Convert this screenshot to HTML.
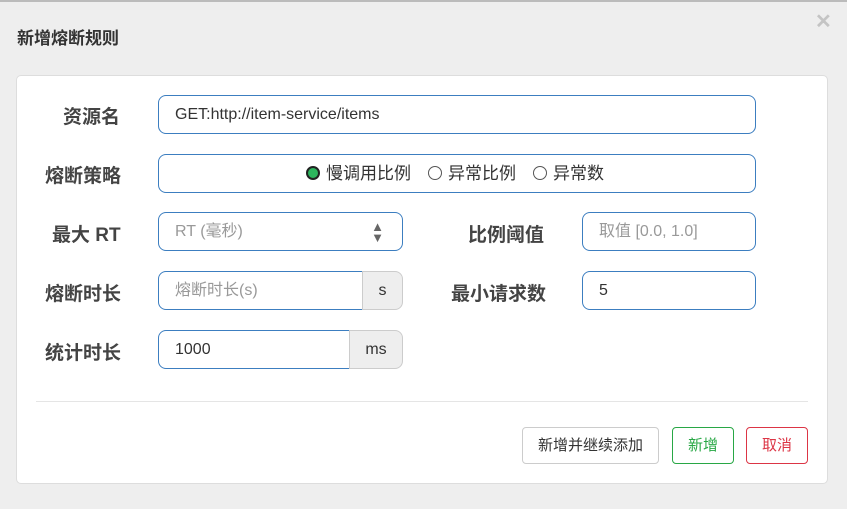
<!DOCTYPE html>
<html><head><meta charset="utf-8"><style>
*{box-sizing:border-box;margin:0;padding:0}
body{width:847px;height:509px;background:#eee;font-family:"Liberation Sans","Noto Sans CJK SC",sans-serif;position:relative;overflow:hidden;color:#333}
.a{position:absolute}
.title{left:17px;top:24px;font-size:17px;font-weight:bold;color:#333}
.close{left:815px;top:9px;font-size:20px;color:#c4c4c4;font-weight:bold}
.card{left:16px;top:75px;width:812px;height:409px;background:#fff;border:1px solid #ddd;border-radius:5px}
.lbl{font-size:19px;font-weight:bold;color:#444;line-height:22px}
.in{border:1px solid #3c7ec0;border-radius:8px;height:39px;font-size:16px;padding:0 16px;line-height:37px;color:#333;background:#fff}
.ph{color:#999}
.addon{border:1px solid #ccc;background:#eee;height:39px;font-size:16px;line-height:37px;text-align:center;color:#333}
.rd{display:inline-block;width:14px;height:14px;border:1px solid #555;border-radius:50%;vertical-align:-1px;margin-right:6px;margin-left:17px}
.btn{height:37px;border-radius:4px;font-size:15px;line-height:35px;text-align:center;background:#fff}
</style></head><body>
<div class="a" style="left:0;top:0;width:847px;height:2px;background:#bbb"></div>
<div class="a title">新增熔断规则</div>
<div class="a close">✕</div>
<div class="a card"></div>

<div class="a lbl" style="left:63px;top:107px">资源名</div>
<div class="a in" style="left:158px;top:95px;width:598px">GET:http://item-service/items</div>

<div class="a lbl" style="left:45px;top:166px">熔断策略</div>
<div class="a in" style="left:158px;top:154px;width:598px;padding-left:130px;font-size:17px"><span class="rd" style="background:#2db55d;border:2px solid #222"></span>慢调用比例<span class="rd"></span>异常比例<span class="rd"></span>异常数</div>

<div class="a lbl" style="left:52px;top:225px">最大 RT</div>
<div class="a in ph" style="left:158px;top:212px;width:245px">RT (毫秒)<span style="position:absolute;right:18px;top:0;color:#666;font-size:13px;line-height:11px;padding-top:8px">▲<br>▼</span></div>
<div class="a lbl" style="left:468px;top:225px">比例阈值</div>
<div class="a in ph" style="left:582px;top:212px;width:174px">取值 [0.0, 1.0]</div>

<div class="a lbl" style="left:45px;top:284px">熔断时长</div>
<div class="a in ph" style="left:158px;top:271px;width:205px;border-radius:8px 0 0 8px">熔断时长(s)</div>
<div class="a addon" style="left:362px;top:271px;width:41px;border-radius:0 8px 8px 0">s</div>
<div class="a lbl" style="left:451px;top:284px">最小请求数</div>
<div class="a in" style="left:582px;top:271px;width:174px">5</div>

<div class="a lbl" style="left:45px;top:343px">统计时长</div>
<div class="a in" style="left:158px;top:330px;width:192px;border-radius:8px 0 0 8px">1000</div>
<div class="a addon" style="left:349px;top:330px;width:54px;border-radius:0 8px 8px 0">ms</div>

<div class="a" style="left:36px;top:401px;width:772px;height:1px;background:#e5e5e5"></div>
<div class="a btn" style="left:522px;top:427px;width:137px;border:1px solid #ccc;color:#333">新增并继续添加</div>
<div class="a btn" style="left:672px;top:427px;width:62px;border:1px solid #28a745;color:#28a745">新增</div>
<div class="a btn" style="left:746px;top:427px;width:62px;border:1px solid #dc3545;color:#dc3545">取消</div>
</body></html>
